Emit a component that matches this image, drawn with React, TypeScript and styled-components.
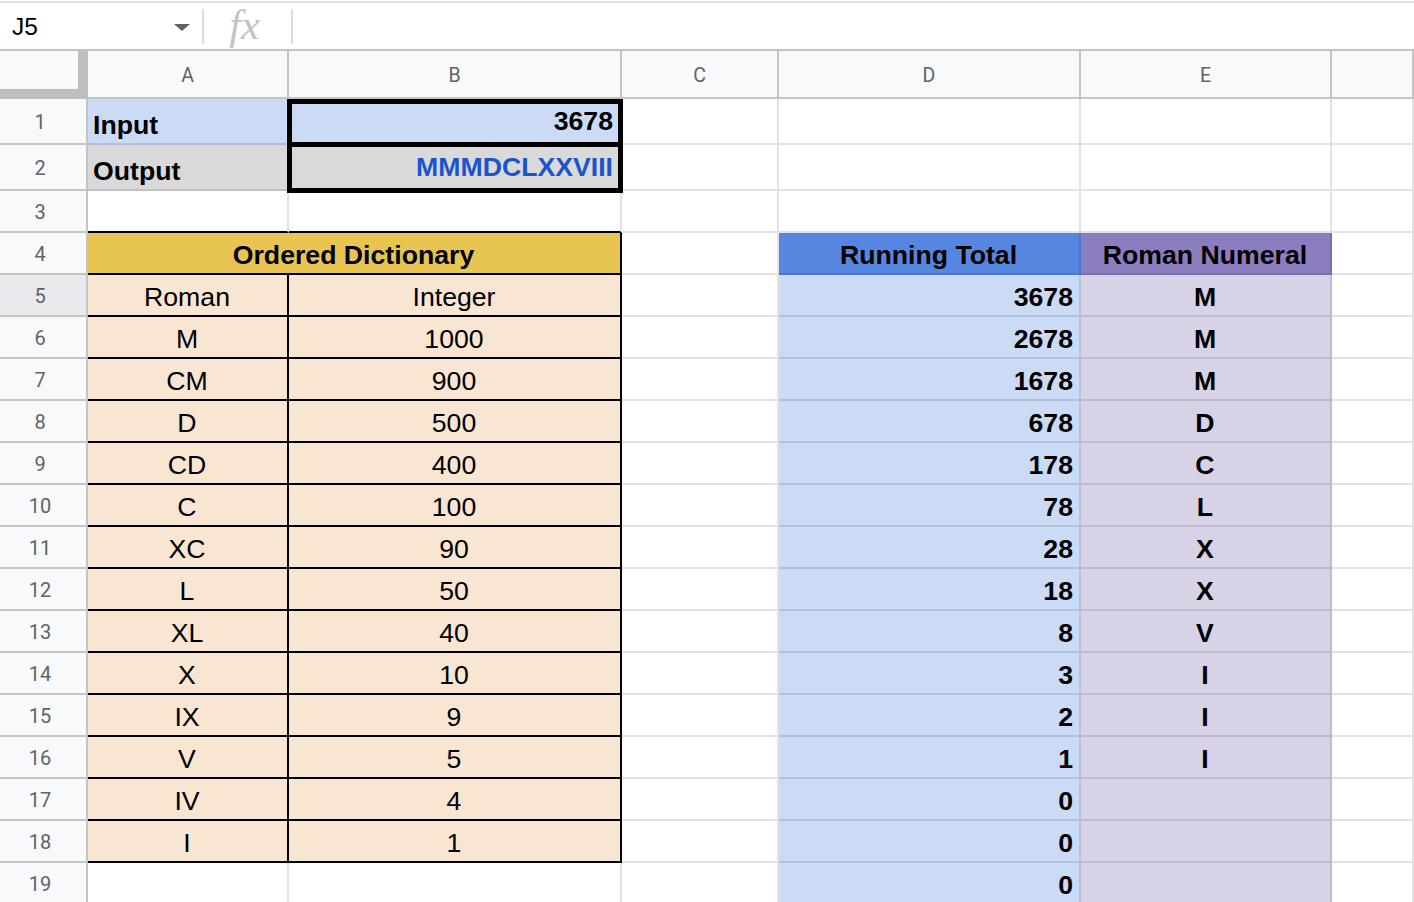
import React from "react";
import styled, { createGlobalStyle, css } from "styled-components";

type Align = "left" | "center" | "right";

type Spec = {
  v?: string;
  bg?: string;
  bold?: boolean;
  align?: Align;
  color?: string;
  r?: string;
  b?: string;
  span?: number;
  box?: "top" | "bottom";
};

const INK = "#000000";
const GRID = "rgba(0, 0, 0, 0.115)";
const LIGHT_BLUE = "#cbdaf5";
const GREY = "#d9d9d9";
const GOLD = "#e8c452";
const PEACH = "#f8e5d2";
const HEAD_BLUE = "#5686e0";
const HEAD_PURPLE = "#8b7dbf";
const LILAC = "#d8d2e7";

const COLUMNS = ["A", "B", "C", "D", "E", ""];

const dictionary: [string, string][] = [
  ["M", "1000"],
  ["CM", "900"],
  ["D", "500"],
  ["CD", "400"],
  ["C", "100"],
  ["XC", "90"],
  ["L", "50"],
  ["XL", "40"],
  ["X", "10"],
  ["IX", "9"],
  ["V", "5"],
  ["IV", "4"],
  ["I", "1"],
];

const running = ["3678", "2678", "1678", "678", "178", "78", "28", "18", "8", "3", "2", "1", "0", "0", "0"];
const numerals = ["M", "M", "M", "D", "C", "L", "X", "X", "V", "I", "I", "I", "", "", ""];

const buildRows = (): Spec[][] => {
  const rows: Spec[][] = [];
  for (let r = 1; r <= 19; r++) {
    const row: Spec[] = [];
    // columns A & B
    if (r === 1) {
      row.push({ v: "Input", bg: LIGHT_BLUE, bold: true });
      row.push({ v: "3678", bg: LIGHT_BLUE, bold: true, align: "right", box: "top" });
    } else if (r === 2) {
      row.push({ v: "Output", bg: GREY, bold: true });
      row.push({ v: "MMMDCLXXVIII", bg: GREY, bold: true, align: "right", color: "#1a55cc", box: "bottom" });
    } else if (r === 3) {
      row.push({ b: INK }, { b: INK });
    } else if (r === 4) {
      row.push({ v: "Ordered Dictionary", bg: GOLD, bold: true, align: "center", span: 2, r: INK, b: INK });
    } else if (r === 5) {
      row.push({ v: "Roman", bg: PEACH, align: "center", r: INK, b: INK });
      row.push({ v: "Integer", bg: PEACH, align: "center", r: INK, b: INK });
    } else if (r <= 18) {
      const [roman, int] = dictionary[r - 6];
      row.push({ v: roman, bg: PEACH, align: "center", r: INK, b: INK });
      row.push({ v: int, bg: PEACH, align: "center", r: INK, b: INK });
    } else {
      row.push({}, {});
    }
    // column C
    row.push({});
    // columns D & E
    if (r === 4) {
      row.push({ v: "Running Total", bg: HEAD_BLUE, bold: true, align: "center" });
      row.push({ v: "Roman Numeral", bg: HEAD_PURPLE, bold: true, align: "center" });
    } else if (r >= 5) {
      row.push({ v: running[r - 5], bg: LIGHT_BLUE, bold: true, align: "right" });
      row.push({ v: numerals[r - 5], bg: LILAC, bold: true, align: "center" });
    } else {
      row.push({}, {});
    }
    // column F
    row.push({});
    rows.push(row);
  }
  return rows;
};

const rows = buildRows();

const GlobalStyle = createGlobalStyle`
  html, body {
    margin: 0;
    padding: 0;
    background: #ffffff;
    overflow: hidden;
  }
  * {
    box-sizing: border-box;
  }
`;

const Page = styled.div`
  width: 1414px;
  height: 902px;
  overflow: hidden;
  background: #ffffff;
`;

const FormulaBar = styled.div`
  display: flex;
  align-items: center;
  height: 50px;
  margin-top: 1px;
  border-top: 2px solid #e3e3e3;
  border-bottom: 2px solid #c4c4c4;
`;

const NameBox = styled.div`
  width: 202px;
  display: flex;
  align-items: center;
  justify-content: space-between;
  padding: 2px 12px 0 12px;
  font-family: "Liberation Sans", Arial, sans-serif;
  font-size: 24.5px;
  color: #000000;
`;

const Divider = styled.div`
  width: 2px;
  height: 35px;
  background: #dadce0;
`;

const FxBox = styled.div`
  width: 87px;
  display: flex;
  justify-content: center;
  padding: 0 6px 2px 0;
  font-family: "Liberation Serif", "DejaVu Serif", serif;
  font-style: italic;
  font-size: 42px;
  line-height: 1;
  color: #c4c4c4;
`;

const Sheet = styled.div`
  display: grid;
  grid-template-columns: 88px 201px 333px 157px 302px 251px 1fr;
  grid-template-rows: 48px 46px 46px repeat(17, 42px);
`;

const Corner = styled.div`
  background: #f8f9fa;
  border-right: 10px solid #bfbfbf;
  border-bottom: 10px solid #bfbfbf;
`;

const ColHead = styled.div`
  display: flex;
  align-items: center;
  justify-content: center;
  padding-top: 2px;
  background: #f8f9fa;
  border-right: 2px solid #c4c4c4;
  border-bottom: 2px solid #c4c4c4;
  font-family: Roboto, "Liberation Sans", sans-serif;
  font-size: 19.5px;
  color: #5f6368;
`;

const RowHead = styled.div<{ $active?: boolean }>`
  display: flex;
  align-items: center;
  justify-content: center;
  padding: 1px 6px 0 0;
  background: ${({ $active }) => ($active ? "#e8eaed" : "#f8f9fa")};
  border-right: 2px solid #c4c4c4;
  border-bottom: 2px solid #c4c4c4;
  font-family: Roboto, "Liberation Sans", sans-serif;
  font-size: 20px;
  color: #5f6368;
`;

const Cell = styled.div<{
  $bg?: string;
  $bold?: boolean;
  $align?: Align;
  $color?: string;
  $r?: string;
  $b?: string;
  $span?: number;
  $box?: "top" | "bottom";
}>`
  display: flex;
  align-items: flex-end;
  justify-content: ${({ $align }) =>
    $align === "right" ? "flex-end" : $align === "center" ? "center" : "flex-start"};
  grid-column: span ${({ $span }) => $span ?? 1};
  padding: 0 6px 4px 5px;
  background: ${({ $bg }) => $bg ?? "#ffffff"};
  border-right: 2px solid ${({ $r }) => $r ?? GRID};
  border-bottom: 2px solid ${({ $b }) => $b ?? GRID};
  font-family: "Liberation Sans", Arial, sans-serif;
  font-size: 26.67px;
  line-height: 1;
  font-weight: ${({ $bold }) => ($bold ? 700 : 400)};
  color: ${({ $color }) => $color ?? "#000000"};
  white-space: nowrap;

  ${({ $box }) =>
    $box &&
    css`
      position: relative;
      border: 5px solid #000000;
      margin: 0 -1px -2px -2px;
      padding: 0 5px 7px 4px;
    `}
  ${({ $box }) =>
    $box === "top" &&
    css`
      z-index: 2;
    `}
  ${({ $box }) =>
    $box === "bottom" &&
    css`
      z-index: 1;
      border-top: 0;
    `}
`;

const Caret = () => (
  <svg width="16" height="7" viewBox="0 0 16 7">
    <path d="M0 0 L16 0 L8 7 Z" fill="#5f6368" />
  </svg>
);

export default function App() {
  return (
    <Page>
      <GlobalStyle />
      <FormulaBar>
        <NameBox>
          <span>J5</span>
          <Caret />
        </NameBox>
        <Divider />
        <FxBox>fx</FxBox>
        <Divider />
      </FormulaBar>
      <Sheet>
        <Corner />
        {COLUMNS.map((c, i) => (
          <ColHead key={i}>{c}</ColHead>
        ))}
        {rows.map((row, ri) => (
          <React.Fragment key={ri}>
            <RowHead $active={ri + 1 === 5}>{ri + 1}</RowHead>
            {row.map((s, ci) => (
              <Cell
                key={ci}
                $bg={s.bg}
                $bold={s.bold}
                $align={s.align}
                $color={s.color}
                $r={s.r}
                $b={s.b}
                $span={s.span}
                $box={s.box}
              >
                {s.v}
              </Cell>
            ))}
          </React.Fragment>
        ))}
      </Sheet>
    </Page>
  );
}
